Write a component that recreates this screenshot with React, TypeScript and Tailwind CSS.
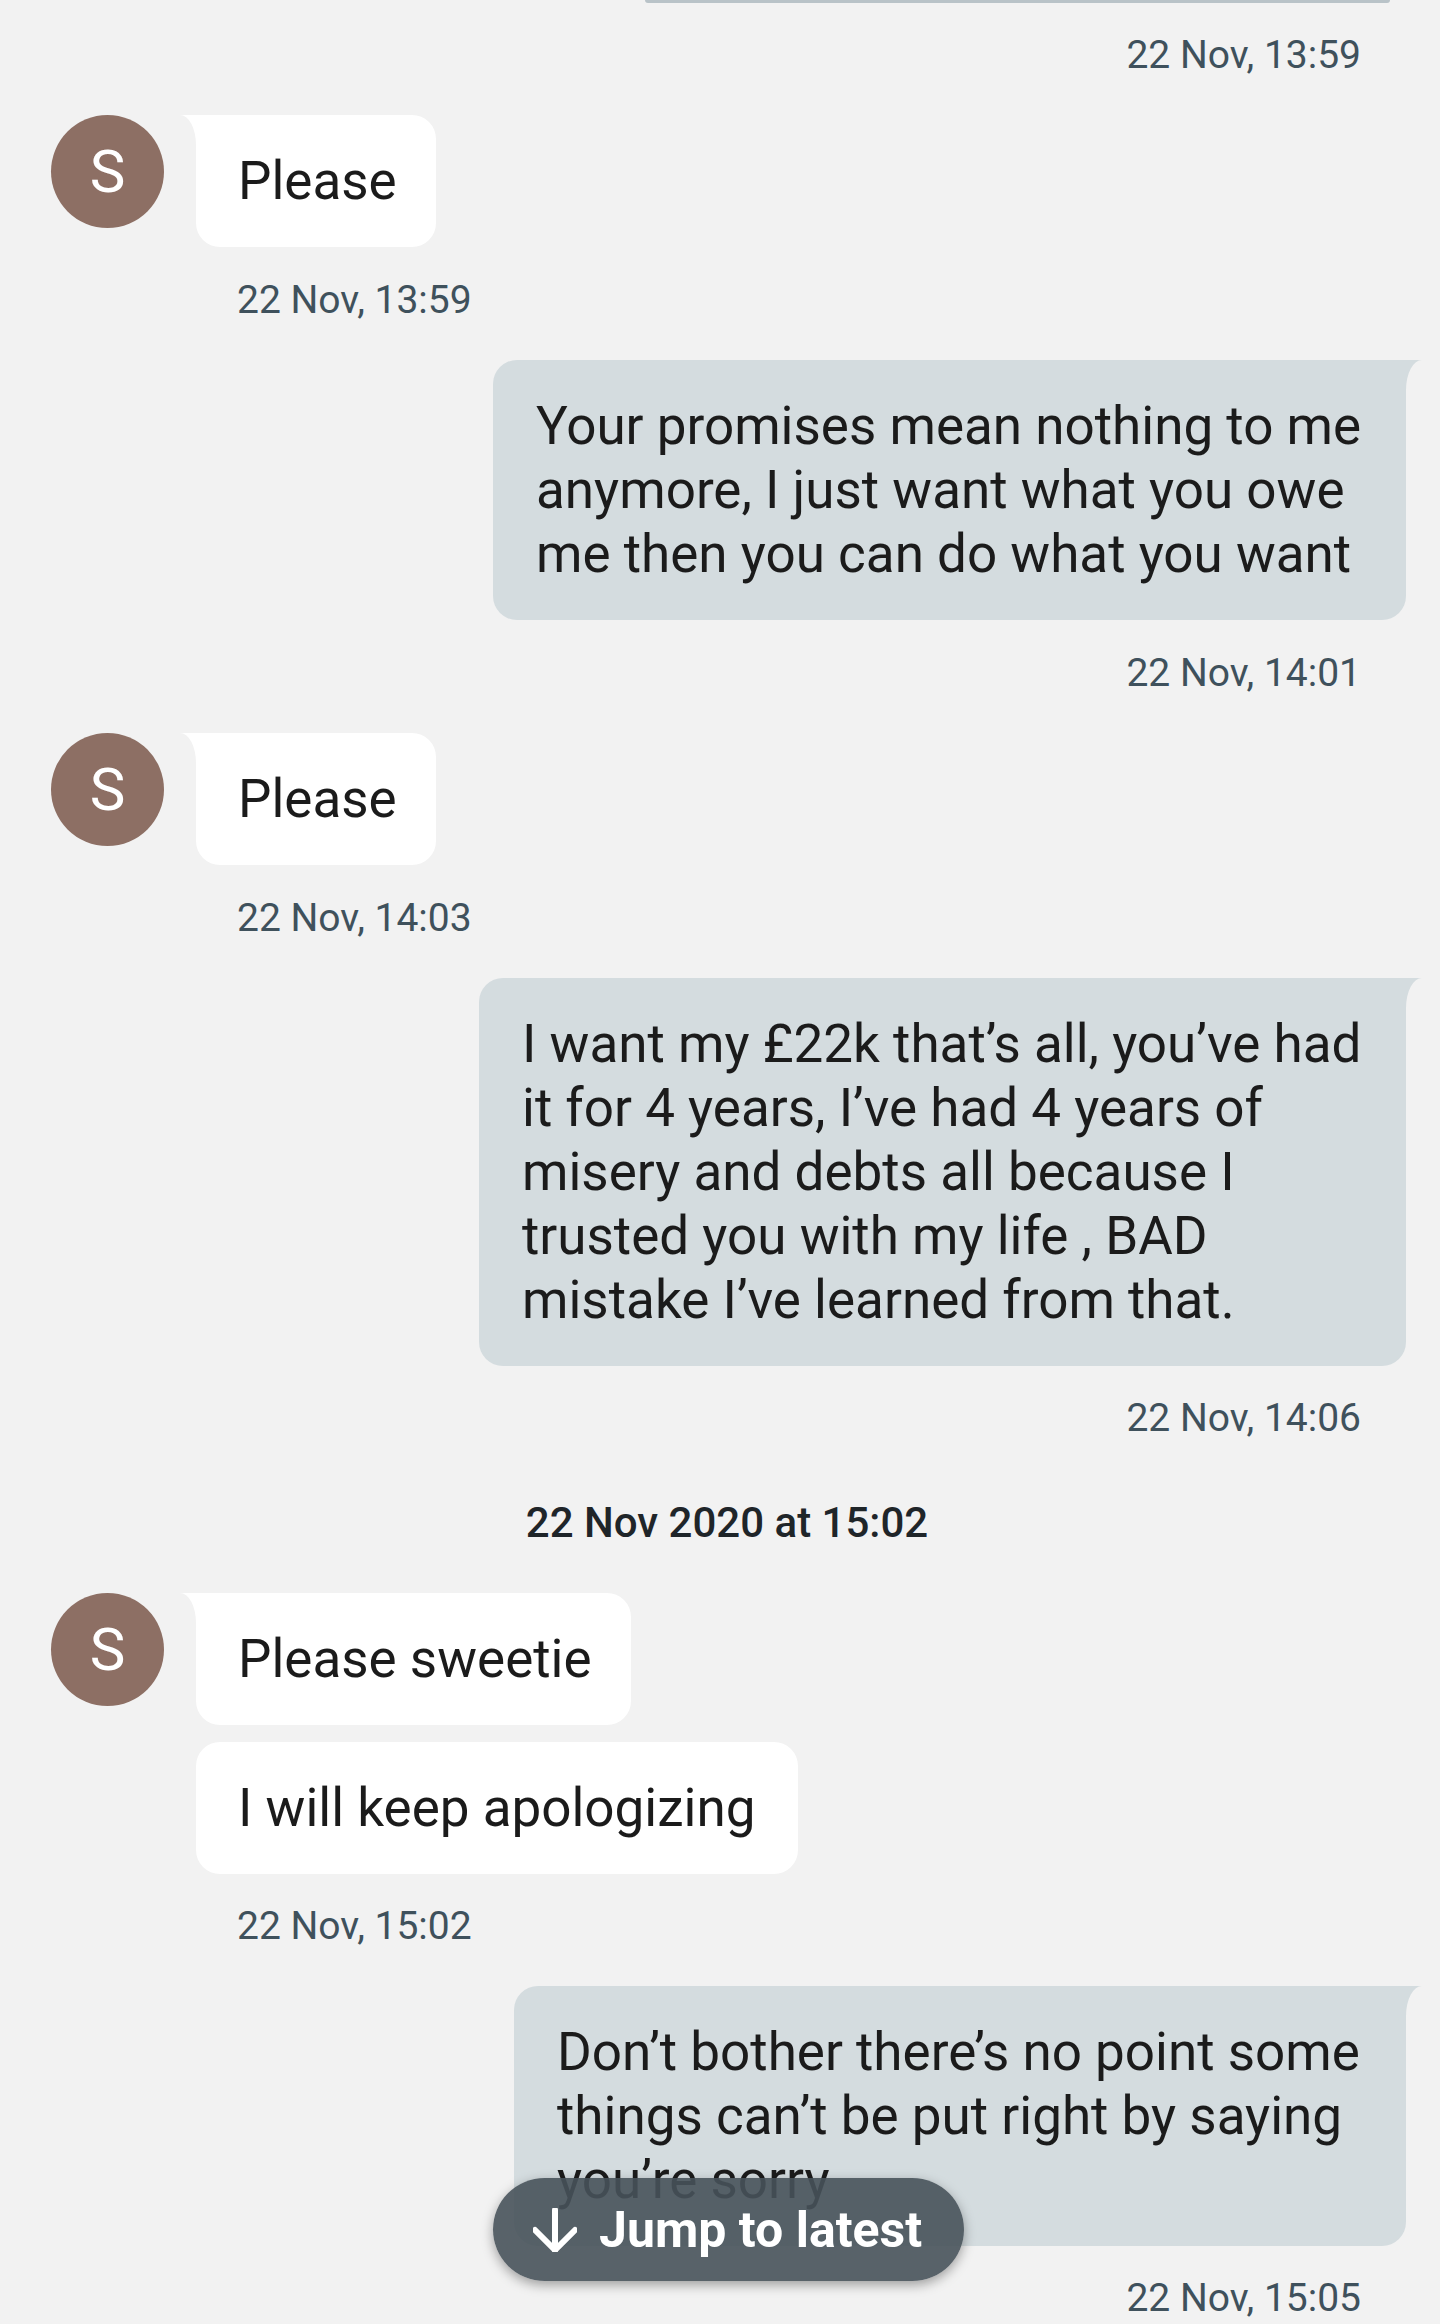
import React from "react";

type BubbleProps = {
  lines: string[];
  width: string;
  tail?: boolean;
  className?: string;
};

const Timestamp: React.FC<{ side: "left" | "right"; className?: string; children: React.ReactNode }> = ({
  side,
  className = "",
  children,
}) => (
  <div
    className={`h-[46px] text-[39px] leading-[46px] text-[#3f515c] ${
      side === "right" ? "self-end pr-[79px]" : "pl-[237px]"
    } ${className}`}
  >
    {children}
  </div>
);

const Avatar: React.FC = () => (
  <div className="flex h-[113px] w-[113px] shrink-0 items-center justify-center rounded-full bg-[#8d6f64] text-[60px] leading-none text-white">
    S
  </div>
);

const Received: React.FC<BubbleProps> = ({ lines, width, tail, className = "" }) => (
  <div
    className={`relative bg-white py-[34px] pl-[42px] text-[53px] leading-[64px] text-[#1b1b1b] whitespace-nowrap ${width} ${
      tail ? "rounded-[24px] rounded-tl-none" : "rounded-[24px]"
    } ${className}`}
  >
    {tail && (
      <svg className="absolute -left-[16px] top-0" width="16" height="30" viewBox="0 0 16 30">
        <path d="M0 0H16V30A16 30 0 0 0 0 0Z" fill="#ffffff" />
      </svg>
    )}
    {lines.map((l) => (
      <div key={l}>{l}</div>
    ))}
  </div>
);

const Sent: React.FC<BubbleProps> = ({ lines, width, className = "" }) => (
  <div
    className={`relative mr-[34px] self-end rounded-[24px] rounded-tr-none bg-[#d4dcdf] py-[34px] pl-[43px] text-[53px] leading-[64px] text-[#1b1b1b] whitespace-nowrap ${width} ${className}`}
  >
    <svg className="absolute -right-[16px] top-0" width="16" height="30" viewBox="0 0 16 30">
      <path d="M16 0H0V30A16 30 0 0 1 16 0Z" fill="#d4dcdf" />
    </svg>
    {lines.map((l) => (
      <div key={l}>{l}</div>
    ))}
  </div>
);

const App: React.FC = () => {
  return (
    <div className="relative h-[2324px] w-full overflow-hidden bg-[#f2f2f2] font-[Roboto,sans-serif]">
      <div className="flex flex-col">
        {/* bottom edge of the previous bubble */}
        <div className="ml-[645px] h-[3px] w-[745px] rounded-b-full bg-[#b9c3c8]" />

        <Timestamp side="right" className="mt-[29px]">
          22 Nov, 13:59
        </Timestamp>

        <div className="mt-[37px] flex items-start pl-[51px]">
          <Avatar />
          <div className="ml-[32px] flex flex-col">
            <Received lines={["Please"]} width="w-[240px]" tail />
          </div>
        </div>
        <Timestamp side="left" className="mt-[30px]">
          22 Nov, 13:59
        </Timestamp>

        <Sent
          className="mt-[37px]"
          width="w-[913px]"
          lines={[
            "Your promises mean nothing to me",
            "anymore, I just want what you owe",
            "me then you can do what you want",
          ]}
        />
        <Timestamp side="right" className="mt-[30px]">
          22 Nov, 14:01
        </Timestamp>

        <div className="mt-[37px] flex items-start pl-[51px]">
          <Avatar />
          <div className="ml-[32px] flex flex-col">
            <Received lines={["Please"]} width="w-[240px]" tail />
          </div>
        </div>
        <Timestamp side="left" className="mt-[30px]">
          22 Nov, 14:03
        </Timestamp>

        <Sent
          className="mt-[37px]"
          width="w-[927px]"
          lines={[
            "I want my £22k that’s all, you’ve had",
            "it for 4 years, I’ve had 4 years of",
            "misery and debts all because I",
            "trusted you with my life , BAD",
            "mistake I’ve learned from that.",
          ]}
        />
        <Timestamp side="right" className="mt-[29px]">
          22 Nov, 14:06
        </Timestamp>

        <div className="mt-[58px] flex h-[48px] justify-center pl-[14px] text-[42px] font-medium leading-[48px] text-[#1f2529]">
          22 Nov 2020 at 15:02
        </div>

        <div className="mt-[46px] flex items-start pl-[51px]">
          <Avatar />
          <div className="ml-[32px] flex flex-col gap-[17px]">
            <Received lines={["Please sweetie"]} width="w-[435px]" tail />
            <Received lines={["I will keep apologizing"]} width="w-[602px]" />
          </div>
        </div>
        <Timestamp side="left" className="mt-[29px]">
          22 Nov, 15:02
        </Timestamp>

        <Sent
          className="mt-[37px]"
          width="w-[892px]"
          lines={[
            "Don’t bother there’s no point some",
            "things can’t be put right by saying",
            "you’re sorry",
          ]}
        />
        <Timestamp side="right" className="mt-[29px]">
          22 Nov, 15:05
        </Timestamp>
      </div>

      {/* floating jump button */}
      <button className="absolute left-[493px] top-[2178px] flex h-[103px] w-[471px] items-center rounded-full bg-[#47525a]/90 pl-[40px] text-[50px] font-bold text-white shadow-[0_4px_12px_rgba(0,0,0,0.35)]">
        <svg width="44" height="44" viewBox="0 0 44 44" fill="none" stroke="white" strokeWidth="6" strokeLinecap="round" strokeLinejoin="round">
          <path d="M22 2V42" />
          <path d="M2 22L22 42L42 22" />
        </svg>
        <span className="ml-[22px] leading-none">Jump to latest</span>
      </button>
    </div>
  );
};

export default App;
